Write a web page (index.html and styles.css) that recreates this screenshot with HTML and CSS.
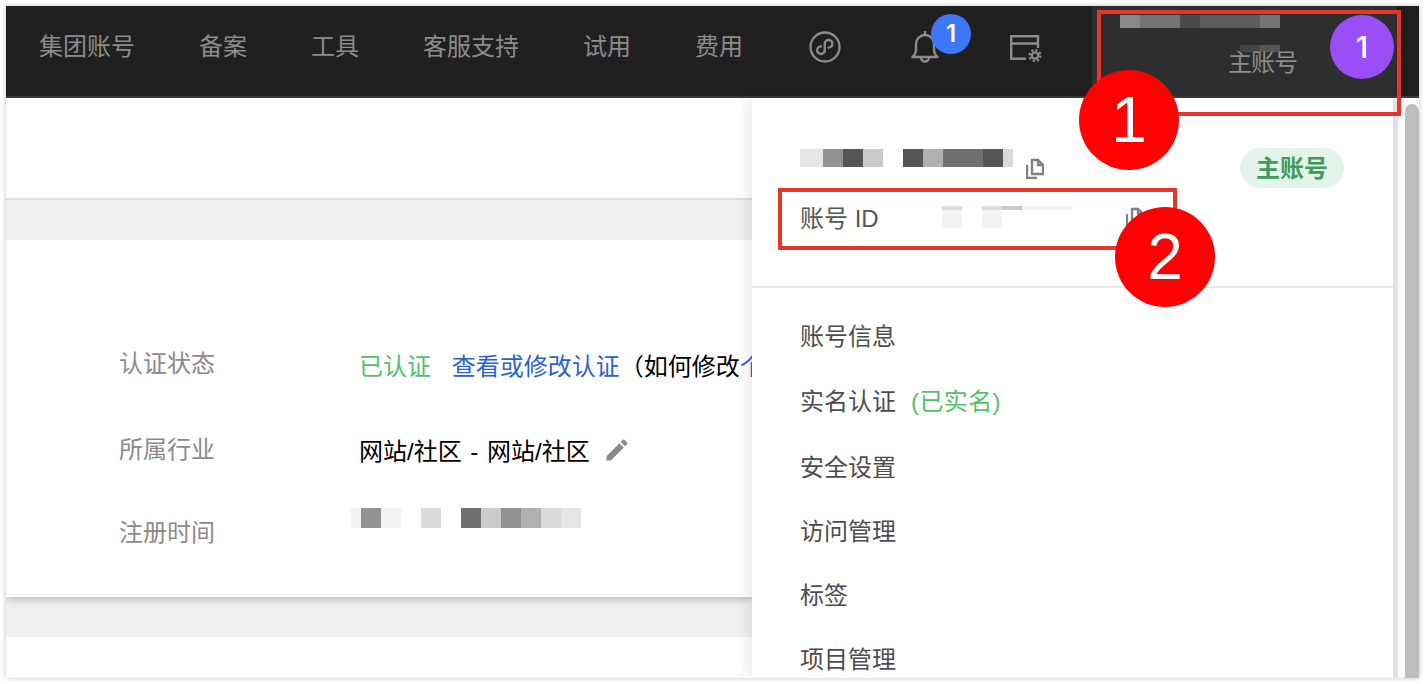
FILE: index.html
```html
<html>
<head>
<meta charset="utf-8">
<title>账号信息</title>
<link rel="stylesheet" href="styles.css">
</head>
<body>
<div class="window">
  <div class="topbar">
    <a class="nav-item">集团账号</a>
    <a class="nav-item">备案</a>
    <a class="nav-item">工具</a>
    <a class="nav-item">客服支持</a>
    <a class="nav-item">试用</a>
    <a class="nav-item">费用</a>
    <a class="nav-icon">
      <svg width="36" height="36" viewBox="0 0 36 36" fill="none" stroke="#8c8c8c" stroke-width="2.4">
        <circle cx="18" cy="18" r="14.5"/>
        <path d="M14 17.4a3.8 3.8 0 1 0 3.8 3.8v-6.4a3.8 3.8 0 1 1 3.8 3.8" stroke-linecap="round"/>
      </svg>
    </a>
    <a class="nav-icon">
      <svg width="36" height="36" viewBox="0 0 36 36" fill="none" stroke="#8c8c8c" stroke-width="2.4">
        <path d="M18 2v4M5.5 28c2.5-2 3.500-4.500 3.500-8v-5a9 9 0 0 1 18 0v5c0 3.500 1 6 3.500 8z" stroke-linejoin="round"/>
        <path d="M14 28.500a4 4 0 0 0 8 0"/>
      </svg>
      <span class="badge">1</span>
    </a>
    <a class="nav-icon">
      <svg width="36" height="36" viewBox="0 0 36 36" fill="none" stroke="#8c8c8c" stroke-width="2.4">
        <path d="M31 19V7.200H4.200v22.600H19M4.200 14.500H31"/>
        <circle cx="28" cy="26.500" r="3.200" stroke-width="2.200"/>
        <circle cx="28" cy="26.500" r="5.400" stroke-width="2.400" stroke-dasharray="2.200 2"/>
      </svg>
    </a>
    <div class="user-area">
      <div class="user-info">
        <div class="strip user-strip" aria-hidden="true">
          <i class="t-b0"></i><i class="t-90"></i><i class="t-90"></i><i class="t-55"></i><i class="t-70"></i><i class="t-70"></i><i class="t-70"></i><i class="t-90"></i>
        </div>
        <div class="strip user-smudge" aria-hidden="true"><i class="t-55"></i><i class="t-70"></i></div>
        <div class="user-role">主账号</div>
      </div>
      <div class="avatar">1</div>
    </div>
  </div>

  <div class="body-row">
    <div class="page">
      <div class="page-top"></div>
      <div class="page-gap page-gap-line"></div>
      <div class="card">
        <div class="info-row">
          <div class="info-label">认证状态</div>
          <div class="info-value value-status">
            <span class="green">已认证</span>
            <a class="link">查看或修改认证</a>（如何修改<a class="link-plain">个</a>
          </div>
        </div>
        <div class="info-row">
          <div class="info-label">所属行业</div>
          <div class="info-value value-industry">
            <span>网站/社区 - 网站/社区</span>
            <svg class="pencil" width="28" height="28" viewBox="0 0 24 24" fill="#8a8a8a">
              <path d="M3 17.250V21h3.750L17.810 9.940l-3.750-3.750L3 17.250zM20.710 7.040a1 1 0 0 0 0-1.410l-2.340-2.340a1 1 0 0 0-1.410 0l-1.830 1.830 3.750 3.750 1.830-1.830z"/>
            </svg>
          </div>
        </div>
        <div class="info-row">
          <div class="info-label">注册时间</div>
          <div class="info-value value-date">
            <div class="strip" aria-hidden="true">
              <i class="half t-f5"></i><i class="t-90"></i><i class="t-f5"></i><i></i><i class="t-d6"></i><i></i><i class="t-70"></i><i class="t-c8"></i><i class="t-90"></i><i class="t-b0"></i><i class="t-d6"></i><i class="t-e5"></i>
            </div>
          </div>
        </div>
      </div>
      <div class="page-gap"></div>
      <div class="page-bottom"></div>
    </div>

    <div class="panel">
      <div class="panel-head">
        <div class="head-row head-name">
          <div class="strip" aria-hidden="true">
            <i class="half t-e5"></i><i class="wide t-e5"></i><i class="t-90"></i><i class="t-55"></i><i class="t-c8"></i><i></i><i class="t-55"></i><i class="t-b0"></i><i class="t-70"></i><i class="t-70"></i><i class="t-55"></i><i class="half t-d6"></i>
          </div>
          <svg class="copy-icon" width="18" height="21" viewBox="0 0 18 21" fill="none" stroke="#808080" stroke-width="2.3">
            <path d="M6 2h6l5 5v9H6zM12 2v5h5"/>
            <path d="M1 7v13h10"/>
          </svg>
          <span class="tag">主账号</span>
        </div>
        <div class="head-row head-id">
          <span class="id-label">账号 ID</span>
          <div class="strip id-strip" aria-hidden="true">
            <i class="t-f5 top-shade"></i><i></i><i class="t-f5 top-shade"></i><i class="top-only t-c8"></i><i class="top-only t-f5"></i><i class="top-only t-f5"></i><i class="half top-only t-f5"></i>
          </div>
          <svg class="copy-icon id-copy" width="18" height="21" viewBox="0 0 18 21" fill="none" stroke="#808080" stroke-width="2.3">
            <path d="M6 2h6l5 5v9H6zM12 2v5h5"/>
            <path d="M1 7v13h10"/>
          </svg>
        </div>
      </div>
      <div class="menu">
        <a class="menu-item">账号信息</a>
        <a class="menu-item menu-real">实名认证<span class="green real-note">(已实名)</span></a>
        <a class="menu-item">安全设置</a>
        <a class="menu-item">访问管理</a>
        <a class="menu-item">标签</a>
        <a class="menu-item">项目管理</a>
      </div>
    </div>

    <div class="scroll-track">
      <div class="scroll-line"></div>
      <div class="scroll-thumb"></div>
    </div>
  </div>

  <div class="mark-box mark-box-user"></div>
  <div class="mark-box mark-box-id"></div>
  <div class="mark-dot mark-dot-user">1</div>
  <div class="mark-dot mark-dot-id">2</div>
</div>
</body>
</html>
```
FILE: styles.css
```css
html, body {
  margin: 0;
  height: 100%;
  background: #fff;
  overflow: hidden;
}
body {
  font-family: "Liberation Sans", "Noto Sans CJK SC", sans-serif;
  font-size: 24px;
}
.window {
  position: relative;
  width: 1413px;
  height: 672px;
  margin: 6px 0 0 6px;
  display: flex;
  flex-direction: column;
  overflow: hidden;
  box-shadow: 0 0 5px rgba(0, 0, 0, 0.25);
  background: #fff;
}

/* top bar */
.topbar {
  flex: none;
  height: 90px;
  display: flex;
  align-items: flex-start;
  gap: 64px;
  padding: 0 21px 0 33px;
  background: #202020;
  border-bottom: 2px solid #3a3a3a;
}
.nav-item {
  flex: none;
  margin-top: 25px;
  color: #8c8c8c;
  line-height: 32px;
  white-space: nowrap;
}
.nav-icon {
  position: relative;
  flex: none;
  display: flex;
  width: 36px;
  height: 36px;
  margin-top: 23px;
}
.badge {
  position: absolute;
  left: 24px;
  top: -15px;
  width: 40px;
  height: 40px;
  border-radius: 50%;
  background: #3d77f5;
  color: #fff;
  font-family: Inter, sans-serif;
  font-weight: 600;
  font-size: 24px;
  line-height: 40px;
  text-align: center;
}
.user-area {
  flex: none;
  display: flex;
  align-self: stretch;
  justify-content: flex-end;
  width: 305px;
  margin-left: -15px;
  padding-right: 3px;
  box-sizing: border-box;
  background: #2e2e2e;
}
.user-info {
  display: flex;
  flex-direction: column;
  align-items: flex-end;
  margin-right: 33px;
  padding-top: 9px;
}
.user-info .user-strip {
  height: 13px;
  margin-bottom: 17px;
  margin-right: 17px;
  opacity: 0.7;
}
.user-info .user-smudge {
  height: 7px;
  margin-bottom: -5px;
  margin-right: 17px;
  opacity: 0.6;
}
.user-role {
  position: relative;
  color: #8c8c8c;
  line-height: 32px;
  letter-spacing: -1px;
}
.avatar {
  flex: none;
  width: 64px;
  height: 64px;
  margin-top: 9px;
  border-radius: 50%;
  background: #9a4ef5;
  color: #fff;
  font-family: Inter, sans-serif;
  font-size: 30px;
  font-weight: 500;
  line-height: 64px;
  text-align: center;
}

/* blurred pieces */
.strip {
  display: flex;
  height: 20px;
  filter: blur(0.6px);
}
.strip i {
  flex: none;
  width: 20px;
}
.strip i.half {
  width: 10px;
}
.strip i.wide {
  width: 13px;
}
.strip i.top-only {
  height: 4px;
}
.strip i.top-shade {
  box-shadow: inset 0 4px 0 #ddd;
}
.t-f5 { background: #f3f3f3; }
.t-e5 { background: #e5e5e5; }
.t-d6 { background: #dadada; }
.t-c8 { background: #cbcbcb; }
.t-b0 { background: #b0b0b0; }
.t-90 { background: #929292; }
.t-70 { background: #707070; }
.t-55 { background: #555; }

/* page behind the panel */
.body-row {
  flex: 1;
  min-height: 0;
  display: flex;
}
.page {
  flex: none;
  width: 746px;
  overflow: hidden;
  display: flex;
  flex-direction: column;
}
.page-top {
  flex: none;
  height: 100px;
}
.page-gap {
  flex: none;
  height: 40px;
  background: #f0f0f0;
}
.page-gap-line {
  height: 40px;
  border-top: 2px solid #ddd;
}
.card {
  position: relative;
  flex: none;
  height: 357px;
  box-sizing: border-box;
  padding: 104px 0 0 113px;
  background: #fff;
  box-shadow: 0 3px 8px rgba(0, 0, 0, 0.22);
  clip-path: inset(0 0 -14px 0);
}
.page-bottom {
  flex: 1;
}
.info-row {
  display: flex;
  height: 40px;
  line-height: 40px;
  white-space: nowrap;
}
.info-row + .info-row {
  margin-top: 46px;
}
.info-row:last-child {
  margin-top: 43px;
}
.info-label {
  flex: none;
  width: 240px;
  color: #8a8a8a;
}
.info-value {
  color: #000;
}
.value-status {
  margin-top: 3px;
}
.value-industry {
  display: flex;
  align-items: center;
  margin-top: 3px;
  word-spacing: 2px;
}
.value-date {
  margin-top: -5px;
  margin-left: -8px;
}
.green {
  color: #52c06b;
}
.link {
  color: #2a5fd6;
  margin-left: 14px;
}
.link-plain {
  color: #2a5fd6;
}
.pencil {
  margin-left: 13px;
  margin-top: -4px;
}

/* account panel */
.panel {
  position: relative;
  flex: none;
  width: 641px;
  box-sizing: border-box;
  background: #fff;
  box-shadow: -3px 0 14px rgba(0, 0, 0, 0.1);
  overflow: hidden;
}
.panel-head {
  height: 190px;
  box-sizing: border-box;
  padding: 50px 49px 0 48px;
  border-bottom: 2px solid #e8e8ec;
}
.head-row {
  display: flex;
  height: 40px;
}
.head-name .strip {
  height: 18px;
  margin-top: 1px;
}
.copy-icon {
  flex: none;
  margin-left: 13px;
  margin-top: 10px;
}
.tag {
  margin-left: auto;
  width: 104px;
  height: 40px;
  border-radius: 20px;
  background: #e4f4ea;
  color: #3f9a5c;
  font-weight: 600;
  line-height: 42px;
  text-align: center;
}
.head-id {
  margin-top: 11px;
  line-height: 40px;
  color: #555;
}
.id-label {
  width: 142px;
  flex: none;
}
.head-id .id-strip {
  margin-top: 7px;
  height: 22px;
}
.head-id .id-copy {
  margin-left: 54px;
  margin-top: 8px;
}
.menu {
  padding-top: 17px;
}
.menu-item {
  display: block;
  height: 64px;
  line-height: 64px;
  padding-left: 48px;
  color: #4d4d4d;
}
.menu-real {
  margin-top: 1px;
  margin-bottom: 2px;
}
.real-note {
  margin-left: 15px;
  letter-spacing: 0.4px;
}

/* scrollbar */
.scroll-track {
  flex: 1;
  display: flex;
  background: #fbfbfb;
}
.scroll-line {
  width: 5px;
  background: #e6e6e8;
}
.scroll-thumb {
  width: 14px;
  margin: 6px 0 0 7px;
  border-radius: 7px 7px 0 0;
  background: #bdbdbd;
}

/* red annotations */
.mark-box {
  position: absolute;
  box-sizing: border-box;
  border: 4px solid #e8352a;
}
.mark-box-user {
  left: 1091px;
  top: 4px;
  width: 304px;
  height: 106px;
}
.mark-box-id {
  left: 772px;
  top: 182px;
  width: 399px;
  height: 62px;
}
.mark-dot {
  position: absolute;
  width: 100px;
  height: 100px;
  border-radius: 50%;
  background: #f00;
  color: #fff;
  font-size: 64px;
  line-height: 100px;
  text-align: center;
}
.mark-dot-user {
  left: 1073px;
  top: 64px;
}
.mark-dot-id {
  left: 1109px;
  top: 201px;
}
```
